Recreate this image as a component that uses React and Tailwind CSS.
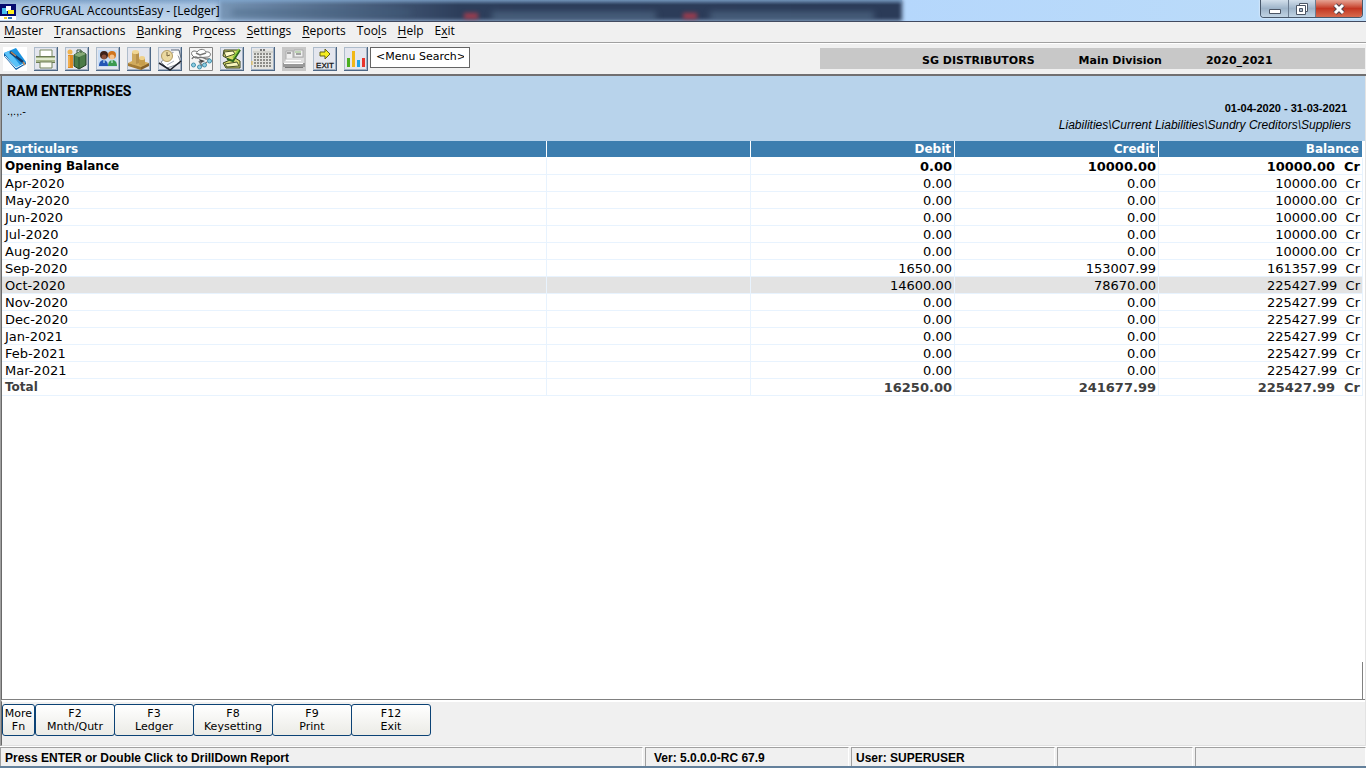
import React, { useState } from 'react';

const menus = [
    { pre: '', key: 'M', post: 'aster' },
    { pre: '', key: 'T', post: 'ransactions' },
    { pre: '', key: 'B', post: 'anking' },
    { pre: 'Pr', key: 'o', post: 'cess' },
    { pre: '', key: 'S', post: 'ettings' },
    { pre: '', key: 'R', post: 'eports' },
    { pre: 'Too', key: 'l', post: 's' },
    { pre: '', key: 'H', post: 'elp' },
    { pre: 'E', key: 'x', post: 'it' }
];

const rows = [
    { name: 'Opening Balance', debit: '0.00', credit: '10000.00', balance: '10000.00', style: 'font-bold text-black [&>td:first-child]:text-[12px]' },
    { name: 'Apr-2020', debit: '0.00', credit: '0.00', balance: '10000.00' },
    { name: 'May-2020', debit: '0.00', credit: '0.00', balance: '10000.00' },
    { name: 'Jun-2020', debit: '0.00', credit: '0.00', balance: '10000.00' },
    { name: 'Jul-2020', debit: '0.00', credit: '0.00', balance: '10000.00' },
    { name: 'Aug-2020', debit: '0.00', credit: '0.00', balance: '10000.00' },
    { name: 'Sep-2020', debit: '1650.00', credit: '153007.99', balance: '161357.99' },
    { name: 'Oct-2020', debit: '14600.00', credit: '78670.00', balance: '225427.99' },
    { name: 'Nov-2020', debit: '0.00', credit: '0.00', balance: '225427.99' },
    { name: 'Dec-2020', debit: '0.00', credit: '0.00', balance: '225427.99' },
    { name: 'Jan-2021', debit: '0.00', credit: '0.00', balance: '225427.99' },
    { name: 'Feb-2021', debit: '0.00', credit: '0.00', balance: '225427.99' },
    { name: 'Mar-2021', debit: '0.00', credit: '0.00', balance: '225427.99' },
    { name: 'Total', debit: '16250.00', credit: '241677.99', balance: '225427.99', style: 'font-bold text-[#404040] [&>td:first-child]:text-[12px]' }
];

const fnKeys = [
    { top: 'More', label: 'Fn', width: 'w-[33px]' },
    { top: 'F2', label: 'Mnth/Qutr', width: 'w-20' },
    { top: 'F3', label: 'Ledger', width: 'w-20' },
    { top: 'F8', label: 'Keysetting', width: 'w-20' },
    { top: 'F9', label: 'Print', width: 'w-20' },
    { top: 'F12', label: 'Exit', width: 'w-20' }
];

const Frame = () => (
    <>
        <rect width="24" height="24" fill="#e4e6ee" />
        <path d="M0 .5H24M.5 0V24" stroke="#aebccb" />
        <path d="M0 23.500H24M23.500 0V24" stroke="#4d6785" />
        <path d="M1 22.500H23M22.500 1V23" stroke="#a3b1c2" />
    </>
);

const tools = [
    {
        name: 'Ledger book',
        art: (
            <>
                <rect width="24" height="24" fill="#fff" />
                <path d="M1 6 13 1l10 14-10 7z" fill="#1b93e0" />
                <path d="M1 6l5-2 11 14-4 4z" fill="#5cc3f8" />
                <path d="M1 6v3l12 14 10-6v-2l-10 6z" fill="#0a5ea8" />
                <path d="M2 9l11 12 9-5" stroke="#e6f5ff" fill="none" />
                <path d="M7 5l13 10" stroke="#123a68" strokeWidth="2.5" />
                <path d="M8 5l5 4M20 15l2 3" stroke="#b7865b" strokeWidth="1.5" />
            </>
        )
    },
    {
        name: 'Print',
        art: (
            <>
                <Frame />
                <path d="M6 9V3h12v6" fill="#fff" stroke="#7b8b62" />
                <path d="M2 9h19v7H2z" fill="#a9b78b" />
                <path d="M2 12h19" stroke="#e1ead1" strokeWidth="2" />
                <path d="M2 9.500h19M2 15.500h19" stroke="#6b7b55" />
                <path d="M6 15h12v6H6z" fill="#fafcf4" stroke="#71805b" />
            </>
        )
    },
    {
        name: 'Account books',
        art: (
            <>
                <Frame />
                <path d="M9 8l7-4 5 3v11l-7 4-5-3z" fill="#4b7b48" stroke="#213e22" />
                <path d="M9 8l7-4 5 3-7 3z" fill="#86aa77" />
                <path d="M14 10v11" stroke="#28502a" />
                <path d="M12 6V3h4v3" stroke="#37553a" fill="none" />
                <circle cx="5" cy="5" r="2.500" fill="#f0b34d" />
                <path d="M3 8h5v13H3z" fill="#e18b22" />
                <path d="M4 9v11" stroke="#ffd078" />
            </>
        )
    },
    {
        name: 'Parties',
        art: (
            <>
                <Frame />
                <rect x="2" y="3" width="19" height="17" fill="#c9def6" />
                <circle cx="8" cy="8" r="4" fill="#3e2219" />
                <circle cx="8" cy="10" r="2.500" fill="#8b513b" />
                <circle cx="16" cy="8" r="4" fill="#cf741e" />
                <circle cx="16" cy="10" r="2.500" fill="#f5c38e" />
                <path d="M3 19c0-8 9-8 9 0z" fill="#2456b4" />
                <path d="M12 19c0-8 9-8 9 0z" fill="#3b9a50" />
                <path d="M8 13v3M16 13v3" stroke="#dff" />
            </>
        )
    },
    {
        name: 'Stock',
        art: (
            <>
                <Frame />
                <path d="M1 16l8-4 13 4-8 5z" fill="#d7af5b" />
                <path d="M1 16v3l13 4v-3z" fill="#a37a33" />
                <path d="M14 20l8-4v3l-8 4z" fill="#876127" />
                <path d="M5 5v12c2 1 5 1 7 0V5z" fill="#cfaa5e" />
                <path d="M9 5v12l3-1V5z" fill="#b8914b" />
                <ellipse cx="8.500" cy="5" rx="3.500" ry="2" fill="#f0d694" />
                <path d="M12 11v7c2 1 4 1 6 0v-7z" fill="#c79d4b" />
                <ellipse cx="15" cy="11" rx="3" ry="2" fill="#efd18b" />
            </>
        )
    },
    {
        name: 'Due dates',
        art: (
            <>
                <Frame />
                <path d="M3 15L18 3l5 13-14 5z" fill="#fff" stroke="#8b919c" />
                <path d="M1 16l11 7 11-9" stroke="#1d222b" strokeWidth="1.500" fill="none" />
                <path d="M13 3h8l2 8" stroke="#5b6777" fill="#fafafa" />
                <circle cx="9" cy="9" r="5.500" fill="#ead8a0" stroke="#b39c62" />
                <path d="M9 5v4l3-1" stroke="#77653d" fill="none" />
                <path d="M9 18l7-4" stroke="#aab0bd" />
            </>
        )
    },
    {
        name: 'Network',
        art: (
            <>
                <path d="M.5.5h23v23H.5z" fill="#f4f4f4" stroke="#858585" />
                <path d="M3 8c-2-4 3-5 5-3 3-4 8-3 9 0 5-1 6 4 2 5L6 11z" fill="#fff" stroke="#777" />
                <path d="M3 12c1-3 5-2 6-1 3-2 6 0 8 1h4M7 6l4 2 6-2M10 14l3 5 5-4" stroke="#777" strokeWidth="1.500" fill="none" />
                <g fill="#8ccfe4" stroke="#458eaa">
                    <circle cx="4.500" cy="18" r="2" />
                    <circle cx="10.500" cy="20" r="2" />
                    <circle cx="15.500" cy="18" r="2" />
                    <circle cx="20.500" cy="14" r="2" />
                </g>
                <path d="M10 12l6 2-4 2z" fill="#444" />
            </>
        )
    },
    {
        name: 'Voucher entry',
        art: (
            <>
                <Frame />
                <path d="M4 3h16l-5 8 5 3v7H6l-3-5 7-3-7-4z" fill="#d9dc6d" stroke="#39431c" />
                <path d="M4 5l9-1 2 3-9 3z" fill="#fffccc" stroke="#4b542c" />
                <path d="M20 3l-7 11-6-2" stroke="#2d671f" strokeWidth="2" fill="none" />
                <path d="M5 17l12-2 2 4-12 1z" fill="#f8f6bd" stroke="#495326" />
                <path d="M19 2l-6 9" stroke="#8ccb3d" strokeWidth="1.500" />
            </>
        )
    },
    {
        name: 'Calendar',
        art: (
            <>
                <Frame />
                <rect x="2" y="2" width="20" height="20" fill="#e4e4e0" />
                <path d="M9 3h6" stroke="#777" strokeWidth="2" strokeDasharray="2 1" />
                <path d="M3 7h18M3 10h18M3 13h18M3 16h18M3 19h18" stroke="#8d8d89" strokeWidth="2" strokeDasharray="2 1" />
                <path d="M2 5h20" stroke="#c2c2bb" />
                <path d="M1 14v4" stroke="#e8b836" />
            </>
        )
    },
    {
        name: 'Billing machine',
        art: (
            <>
                <rect width="24" height="24" fill="#c7c7c7" />
                <path d="M4 4h7v8H4zM12 3h9v7h-9z" fill="#efefef" stroke="#adadad" />
                <path d="M5 6h4M14 7h5" stroke="#a2a2a2" strokeWidth="2" />
                <path d="M13 5h6" stroke="#91bd7c" />
                <path d="M2 15l3-4h17v5H2z" fill="#dedede" />
                <path d="M1 16h22v4H1z" fill="#999" />
                <path d="M4 13.500h15M2 16.500h19" stroke="#fff" />
                <path d="M3 20.500h18" stroke="#777" />
            </>
        )
    },
    {
        name: 'Exit',
        art: (
            <>
                <Frame />
                <path d="M7 5h5V2l5 5-5 5V9H7z" fill="#f5ee20" stroke="#656319" />
                <text x="12" y="21" textAnchor="middle" fontFamily="Liberation Sans" fontSize="8" fill="#111" stroke="#111" strokeWidth=".3">EXIT</text>
            </>
        )
    },
    {
        name: 'Charts',
        art: (
            <>
                <Frame />
                <path d="M3 11h3v9H3z" fill="#4caf20" />
                <path d="M8 4h3v16H8z" fill="#f1b817" />
                <path d="M13 13h3v7h-3z" fill="#21a5e5" />
                <path d="M18 11h3v9h-3z" fill="#e9342c" />
            </>
        )
    }
];

const TitleBar = () => (
    <header className="relative flex h-[22px] shrink-0 justify-between overflow-hidden border-b border-[#414a60] bg-[#b6d8fb]">
        {/* Blurred windows behind the glass */}
        <div className="absolute inset-0 flex" aria-hidden="true">
            <div className="w-[16%] bg-gradient-to-b from-[#9ebbdc] to-[#c4d9ee]" />
            <div className="w-[50%] bg-gradient-to-r from-[#7896b6] via-[#2d3e5b] via-35% to-[#2b3b58] blur-[2px]" />
            <div className="grow bg-gradient-to-r from-[#b5d7fc] to-[#bcdcf8]" />
        </div>
        <div className="absolute left-0 top-0 h-[5px] w-[66%] bg-gradient-to-b from-[#6c94bd]/60 to-transparent" />
        <div className="absolute left-[17%] top-[10px] h-[5px] w-[13%] bg-[#43607f]/60 blur-[3px]" />
        <div className="absolute left-[34%] top-[13px] h-[6px] w-[1%] bg-[#bb3c4b]/80 blur-[2px]" />
        <div className="absolute left-[36%] top-[12px] h-2 w-[12%] bg-[#66839f]/50 blur-[3px]" />
        <div className="absolute left-[50%] top-[13px] h-[6px] w-[1%] bg-[#bb3c4b]/80 blur-[2px]" />
        <div className="absolute left-[52%] top-[12px] h-2 w-[12%] bg-[#66839f]/50 blur-[3px]" />

        <div className="relative flex items-center gap-1 font-['Open_Sans','Noto_Sans',sans-serif] text-xs text-black">
            <svg width="17" height="18" viewBox="0 0 17 18" aria-hidden="true">
                <path d="M0 2h16v12H0z" fill="#060c70" />
                <path d="M2 6h5v6H2z" fill="#48c2ef" />
                <path d="M6 4h5v5H6z" fill="#fff" />
                <path d="M8 8h6v4H8z" fill="#ffee20" />
                <path d="M0 14h16v4H0z" fill="#fff" />
                <path d="M4 16h3" stroke="#e5ce35" strokeWidth="2" />
                <path d="M8 16h4" stroke="#3577b7" strokeWidth="2" />
            </svg>
            <h1>GOFRUGAL AccountsEasy - [Ledger]</h1>
        </div>

        <div className="relative mr-[3px] flex h-[18px] overflow-hidden rounded-b border border-t-0 border-[#48586b] shadow-[0_0_2px_#fff]">
            <button aria-label="Minimize" className="flex w-7 items-center justify-center border-r border-[#6c7d91] bg-gradient-to-b from-[#d2dfeb] via-[#9eb4c9] to-[#c1d4e4]">
                <svg width="14" height="16" viewBox="0 0 14 16"><path d="M1.500 8.500h11v4h-11z" fill="#fff" stroke="#4c5665" /></svg>
            </button>
            <button aria-label="Restore" className="flex w-[27px] items-center justify-center border-r border-[#6c7d91] bg-gradient-to-b from-[#d2dfeb] via-[#9eb4c9] to-[#c1d4e4]">
                <svg width="14" height="16" viewBox="0 0 14 16">
                    <path d="M4.500 2.500h8v8h-8z" fill="#fff" stroke="#4c5665" />
                    <path d="M1.500 4.500h9v9h-9z" fill="#fff" stroke="#4c5665" />
                    <path d="M4.500 7.500h3v3h-3z" fill="#a9bacb" stroke="#4c5665" />
                </svg>
            </button>
            <button aria-label="Close" className="flex w-[46px] items-center justify-center bg-gradient-to-b from-[#e5a293] via-[#c33622] to-[#d7694d]">
                <svg width="14" height="16" viewBox="0 0 14 16">
                    <path d="M3 4l8 8M11 4l-8 8" stroke="#53434c" strokeWidth="5" />
                    <path d="M3 4l8 8M11 4l-8 8" stroke="#fff" strokeWidth="3" />
                </svg>
            </button>
        </div>
    </header>
);

const App = () => {
    const [selected, setSelected] = useState(7);

    return (
        <div className="flex min-h-screen flex-col bg-[#f0f0f0] font-['DejaVu_Sans',Verdana,sans-serif] text-black">
            <TitleBar />

            {/* Menu bar */}
            <nav className="flex h-[21px] shrink-0 items-center gap-[11px] border-b border-[#a0a0a0] px-1 pb-[2px] font-['Open_Sans','Noto_Sans',sans-serif] text-xs">
                {menus.map((m) => (
                    <button key={m.key + m.post}>
                        {m.pre}<span className="underline underline-offset-2">{m.key}</span>{m.post}
                    </button>
                ))}
            </nav>

            {/* Toolbar */}
            <div className="flex h-[33px] shrink-0 items-start justify-between border-b-2 border-t border-b-[#716f70] border-t-white pl-[3px] pt-[3px]">
                <div className="flex gap-[7px]">
                    {tools.map((tool) => (
                        <button key={tool.name} aria-label={tool.name} className="size-6">
                            <svg width="24" height="24" viewBox="0 0 24 24">{tool.art}</svg>
                        </button>
                    ))}
                    <input
                        aria-label="Menu search"
                        defaultValue="<Menu Search>"
                        className="-ml-[5px] h-[21px] w-[100px] border border-[#646464] bg-white px-[5px] pb-[2px] text-[11px]"
                    />
                </div>
                <div className="mr-px mt-px flex h-[21px] w-[545px] items-center gap-11 bg-[#c8c8c8] pl-[102px] pt-[6px] text-[11px] font-bold">
                    <span>SG DISTRIBUTORS</span>
                    <span>Main Division</span>
                    <span>2020_2021</span>
                </div>
            </div>

            {/* Ledger window */}
            <main className="flex grow flex-col border-x border-l-[#a0a0a0] border-r-[#e3e3e3]">
                <section className="flex h-[65px] shrink-0 justify-between border-l border-[#696969] bg-[#b8d3eb] pl-[5px] pr-[14px]">
                    <div className="pt-[7px]">
                        <h2 className="font-[Roboto,'Liberation_Sans',sans-serif] text-sm leading-4 font-bold">RAM ENTERPRISES</h2>
                        <p className="font-['Liberation_Sans',Arial,sans-serif] text-[11px] leading-6">.,.,.-</p>
                    </div>
                    <div className="pt-6 text-right font-['Liberation_Sans',Arial,sans-serif]">
                        <p className="pr-1 text-[11px] leading-4 font-bold">01-04-2020 - 31-03-2021</p>
                        <p className="text-xs leading-[18px] italic">Liabilities\Current Liabilities\Sundry Creditors\Suppliers</p>
                    </div>
                </section>

                <div className="relative grow border-b border-l border-b-[#808080] border-l-[#696969] bg-white pr-[2px]">
                    <table className="w-full table-fixed border-separate border-spacing-0 text-[13px] leading-[15px]">
                        <thead>
                            <tr className="bg-[#3d7eaf] text-xs leading-[15px] text-white [&>th]:border-r [&>th]:border-b [&>th]:border-white [&>th]:px-[3px] [&>th]:pb-0 [&>th]:pt-px">
                                <th className="text-left">Particulars</th>
                                <th className="w-[204px]" />
                                <th className="w-[204px] text-right">Debit</th>
                                <th className="w-[204px] text-right">Credit</th>
                                <th className="w-[204px] text-right">Balance</th>
                            </tr>
                        </thead>
                        <tbody>
                            {rows.map((row, i) => (
                                <tr
                                    key={row.name}
                                    onClick={() => setSelected(i)}
                                    className={`[&>td]:border-r [&>td]:border-b [&>td]:border-[#e8f3fe] [&>td]:pl-[3px] [&>td]:pr-[2px] [&>td]:pb-0 [&>td]:pt-px ${i === selected ? 'bg-[#e3e3e3]' : ''} ${row.style || ''}`}
                                >
                                    <td>{row.name}</td>
                                    <td />
                                    <td className="text-right">{row.debit}</td>
                                    <td className="text-right">{row.credit}</td>
                                    <td className="text-right whitespace-pre">{row.balance}{'  Cr'}</td>
                                </tr>
                            ))}
                        </tbody>
                    </table>
                    {/* Resize edge in the grid corner */}
                    <div className="absolute bottom-0 right-[2px] h-[37px] w-px bg-[#808080]" />
                </div>

                <div className="flex h-[46px] shrink-0 border-b border-l border-t-2 border-b-[#e0e0e0] border-l-[#696969] border-t-white pt-[2px]">
                    {fnKeys.map((fn) => (
                        <button
                            key={fn.top}
                            className={`-mr-px h-8 rounded-[3px] border border-[#0b4275] bg-gradient-to-b from-white to-[#ebebe6] text-[11px] leading-[13px] first:mr-0 ${fn.width}`}
                        >
                            {fn.top}<br />{fn.label}
                        </button>
                    ))}
                </div>
            </main>

            {/* Status bar */}
            <footer className="flex h-[22px] shrink-0 gap-[2px] border-b-2 border-b-[#63809b] border-t border-t-white font-['Liberation_Sans',Arial,sans-serif] text-xs font-bold [&>div]:border-l [&>div]:border-t [&>div]:border-r [&>div]:border-[#a0a0a0] [&>div]:border-r-white [&>div]:pl-1 [&>div]:leading-5">
                <div className="grow">Press ENTER or Double Click to DrillDown Report</div>
                <div className="w-[204px]"><span className="pl-1">Ver: 5.0.0.0-RC 67.9</span></div>
                <div className="w-[204px]">User: SUPERUSER</div>
                <div className="w-[136px]" />
                <div className="w-[171px]" />
            </footer>
        </div>
    );
};

export default App;
